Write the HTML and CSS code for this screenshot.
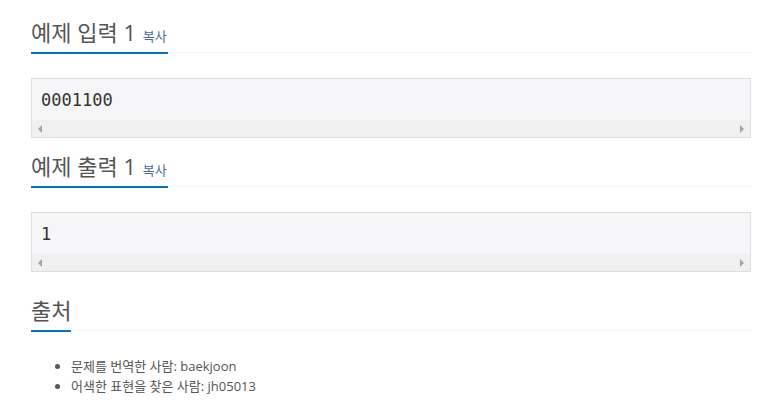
FILE: index.html
```html
<!DOCTYPE html>
<html lang="ko">
<head>
<meta charset="utf-8">
<link rel="stylesheet" href="styles.css">
</head>
<body>
<div class="page">
  <section class="sample">
    <div class="headline"><h2>예제 입력 1 <span class="copy">복사</span></h2></div>
    <div class="pre">
      <div class="pre-text">0001100</div>
      <div class="scrollbar"><span class="arr arr-left"></span><span class="arr arr-right"></span></div>
    </div>
  </section>
  <section class="sample">
    <div class="headline"><h2>예제 출력 1 <span class="copy">복사</span></h2></div>
    <div class="pre">
      <div class="pre-text">1</div>
      <div class="scrollbar"><span class="arr arr-left"></span><span class="arr arr-right"></span></div>
    </div>
  </section>
  <section class="source">
    <div class="headline"><h2>출처</h2></div>
    <ul class="credits">
      <li>문제를 번역한 사람: baekjoon</li>
      <li>어색한 표현을 찾은 사람: jh05013</li>
    </ul>
  </section>
</div>
</body>
</html>
```
FILE: styles.css
```css
html, body {
  margin: 0;
  padding: 0;
  background: #fff;
}
body {
  font-family: "Open Sans", "Noto Sans CJK KR", sans-serif;
  color: #555;
}
.page {
  width: 720px;
  padding-left: 31px;
  padding-top: 7px;
}
.headline {
  display: flex;
  align-items: flex-end;
  border-bottom: 1px dotted #e4e9f0;
  margin: 10px 0 25px 0;
}
.headline h2 {
  display: block;
  margin: 0 0 -2px 0;
  padding-bottom: 5px;
  border-bottom: 2px solid #0076c0;
  font-size: 22px;
  font-weight: 400;
  line-height: 30px;
  color: #555;
}
.copy {
  font-size: 13px;
  line-height: 1;
  color: #3f6ea5;
  margin-left: 1px;
  margin-right: 1px;
}
.pre {
  border: 1px solid #dedee0;
  background: #f6f6f8;
}
.pre-text {
  font-family: "DejaVu Sans Mono", monospace;
  font-size: 17px;
  line-height: 21px;
  padding: 11px 9px 9px 9px;
  color: #333;
}
.scrollbar {
  height: 17px;
  background: #f0f0f0;
  display: flex;
  justify-content: space-between;
  align-items: center;
  padding: 0 6px;
}
.arr {
  width: 0;
  height: 0;
  border-top: 4px solid transparent;
  border-bottom: 4px solid transparent;
}
.arr-left {
  border-right: 4px solid #a3a3a3;
}
.arr-right {
  border-left: 4px solid #a3a3a3;
}
.sample + .sample .headline {
  margin-top: 13px;
}
.source .headline {
  margin-top: 23px;
}
.credits {
  margin: 2px 0 0 0;
  padding-left: 40px;
  font-size: 13px;
  line-height: 20px;
}
```
